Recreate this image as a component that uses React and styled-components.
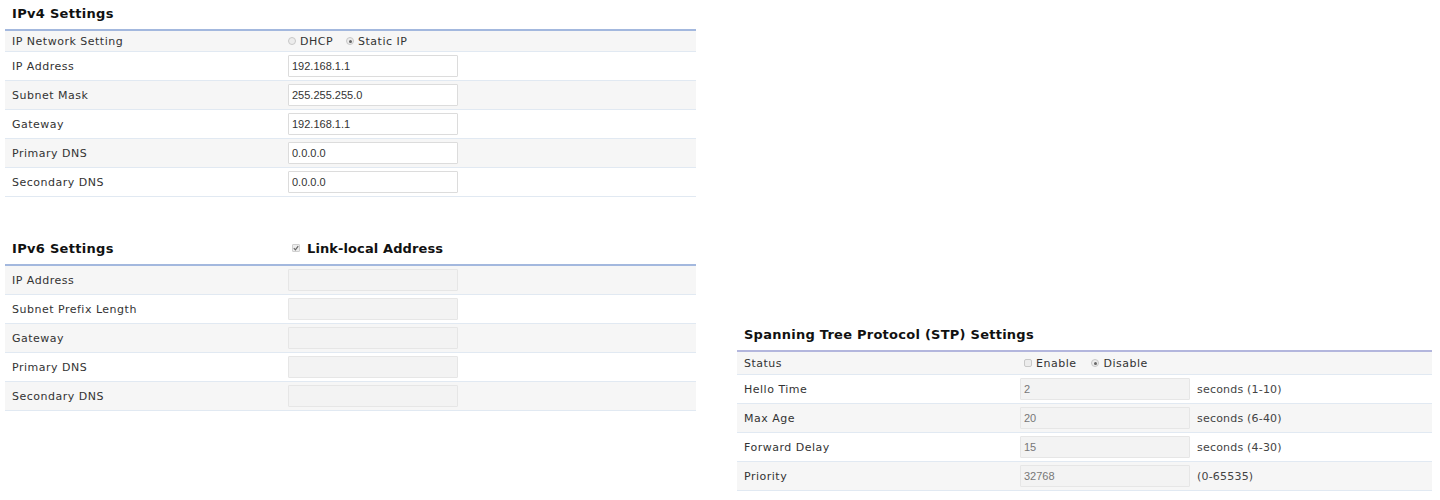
import styled, { createGlobalStyle } from "styled-components";

const GlobalStyle = createGlobalStyle`
	html, body {
		margin: 0;
		padding: 0;
		background: #fff;
	}
	body {
		font-family: "DejaVu Sans", Verdana, sans-serif;
		color: #333;
	}
`;

const Page = styled.div`
	display: grid;
	grid-template-columns: 691px 695px;
	column-gap: 41px;
	min-height: 500px;
	padding: 0 8px 0 5px;
	box-sizing: border-box;
`;

const Column = styled.div`
	display: flex;
	flex-direction: column;
	align-self: ${(p) => (p.$bottom ? "end" : "start")};
	padding-bottom: ${(p) => (p.$bottom ? "9px" : "0")};
`;

const Section = styled.section`
	margin-top: ${(p) => p.$gap || 0}px;
`;

const Header = styled.div`
	display: flex;
	align-items: center;
	height: 31px;
	padding: 0 7px 3px;
	box-sizing: border-box;
	border-bottom: 2px solid ${(p) => p.$line || "#a3b8de"};
	font-size: 13px;
	font-weight: bold;
	color: #111;
`;

const Title = styled.span`
	min-width: 276px;
	white-space: nowrap;
	letter-spacing: ${(p) => p.$spacing || 0.3}px;
`;

const HeaderCheck = styled.span`
	display: flex;
	align-items: center;
	gap: 7px;
	padding-left: 4px;
	letter-spacing: 0.1px;
`;

const Row = styled.div`
	display: grid;
	grid-template-columns: 283px 170px auto;
	align-items: center;
	height: ${(p) => p.$h || 29}px;
	box-sizing: border-box;
	border-bottom: 1px solid #e1e9f2;
	background: ${(p) => (p.$shade ? "#f6f6f6" : "#fff")};
	font-size: 11px;
	letter-spacing: 0.5px;
`;

const Label = styled.span`
	padding-left: 7px;
	color: #333;
`;

const Field = styled.input`
	width: 170px;
	height: 22px;
	box-sizing: border-box;
	margin: 0;
	padding: 0 3px;
	border: 1px solid ${(p) => (p.disabled ? "#e6e6e6" : "#dcdcdc")};
	border-radius: 1px;
	background: ${(p) => (p.disabled ? "#f3f3f3" : "#fff")};
	font-family: "Liberation Sans", Arial, sans-serif;
	font-size: 11px;
	letter-spacing: 0;
	color: ${(p) => (p.disabled ? "#777" : "#333")};
	outline: none;
`;

const Unit = styled.span`
	padding-left: 7px;
	color: #444;
	letter-spacing: 0.2px;
`;

const Choices = styled.span`
	display: flex;
	align-items: center;
	gap: ${(p) => p.$gap || 13}px;
	padding-left: ${(p) => p.$indent || 0}px;
`;

const Choice = styled.span`
	display: flex;
	align-items: center;
	gap: 4px;
	color: #333;
`;

const Dot = styled.span`
	position: relative;
	width: 8px;
	height: 8px;
	box-sizing: border-box;
	border-radius: ${(p) => (p.$square ? "2px" : "50%")};
	border: 1px solid #c8c8c8;
	background: #ececec;

	&::after {
		content: "";
		display: ${(p) => (p.$on ? "block" : "none")};
		position: absolute;
		left: 1.5px;
		top: 1.5px;
		width: 3px;
		height: 3px;
		border-radius: 50%;
		background: #666;
	}
`;

const Tick = styled.span`
	display: inline-flex;
	align-items: center;
	justify-content: center;
	width: 8px;
	height: 8px;
	box-sizing: border-box;
	border: 1px solid #cfcfcf;
	border-radius: 1px;
	background: #ededed;
`;

function Radio({ label, on, square }) {
	return (
		<Choice>
			<Dot $on={on} $square={square} />
			{label}
		</Choice>
	);
}

const ipv4 = [
	["IP Address", "192.168.1.1"],
	["Subnet Mask", "255.255.255.0"],
	["Gateway", "192.168.1.1"],
	["Primary DNS", "0.0.0.0"],
	["Secondary DNS", "0.0.0.0"],
];

const ipv6 = ["IP Address", "Subnet Prefix Length", "Gateway", "Primary DNS", "Secondary DNS"];

const stp = [
	["Hello Time", "2", "seconds (1-10)"],
	["Max Age", "20", "seconds (6-40)"],
	["Forward Delay", "15", "seconds (4-30)"],
	["Priority", "32768", "(0-65535)"],
];

export default function App() {
	return (
		<>
			<GlobalStyle />
			<Page>
				<Column>
					<Section>
						<Header>
							<Title>IPv4 Settings</Title>
						</Header>
						<Row $h={21} $shade>
							<Label>IP Network Setting</Label>
							<Choices $gap={13}>
								<Radio label="DHCP" />
								<Radio label="Static IP" on />
							</Choices>
						</Row>
						{ipv4.map(([name, value], i) => (
							<Row key={name} $shade={i % 2 === 1}>
								<Label>{name}</Label>
								<Field defaultValue={value} />
							</Row>
						))}
					</Section>

					<Section $gap={38}>
						<Header>
							<Title>IPv6 Settings</Title>
							<HeaderCheck>
								<Tick>
									<svg width="6" height="6" viewBox="0 0 6 6">
										<path d="M0.8 3.2 L2.4 4.8 L5.2 1.2" fill="none" stroke="#666" strokeWidth="1.2" />
									</svg>
								</Tick>
								Link-local Address
							</HeaderCheck>
						</Header>
						{ipv6.map((name, i) => (
							<Row key={name} $shade={i % 2 === 0}>
								<Label>{name}</Label>
								<Field disabled defaultValue="" />
							</Row>
						))}
					</Section>
				</Column>

				<Column $bottom>
					<Section>
						<Header $line="#b3b6dd">
							<Title $spacing={0.25}>Spanning Tree Protocol (STP) Settings</Title>
						</Header>
						<Row $h={23} $shade>
							<Label>Status</Label>
							<Choices $gap={15} $indent={4}>
								<Radio label="Enable" square />
								<Radio label="Disable" on />
							</Choices>
						</Row>
						{stp.map(([name, value, unit], i) => (
							<Row key={name} $shade={i % 2 === 1}>
								<Label>{name}</Label>
								<Field disabled defaultValue={value} />
								<Unit>{unit}</Unit>
							</Row>
						))}
					</Section>
				</Column>
			</Page>
		</>
	);
}
